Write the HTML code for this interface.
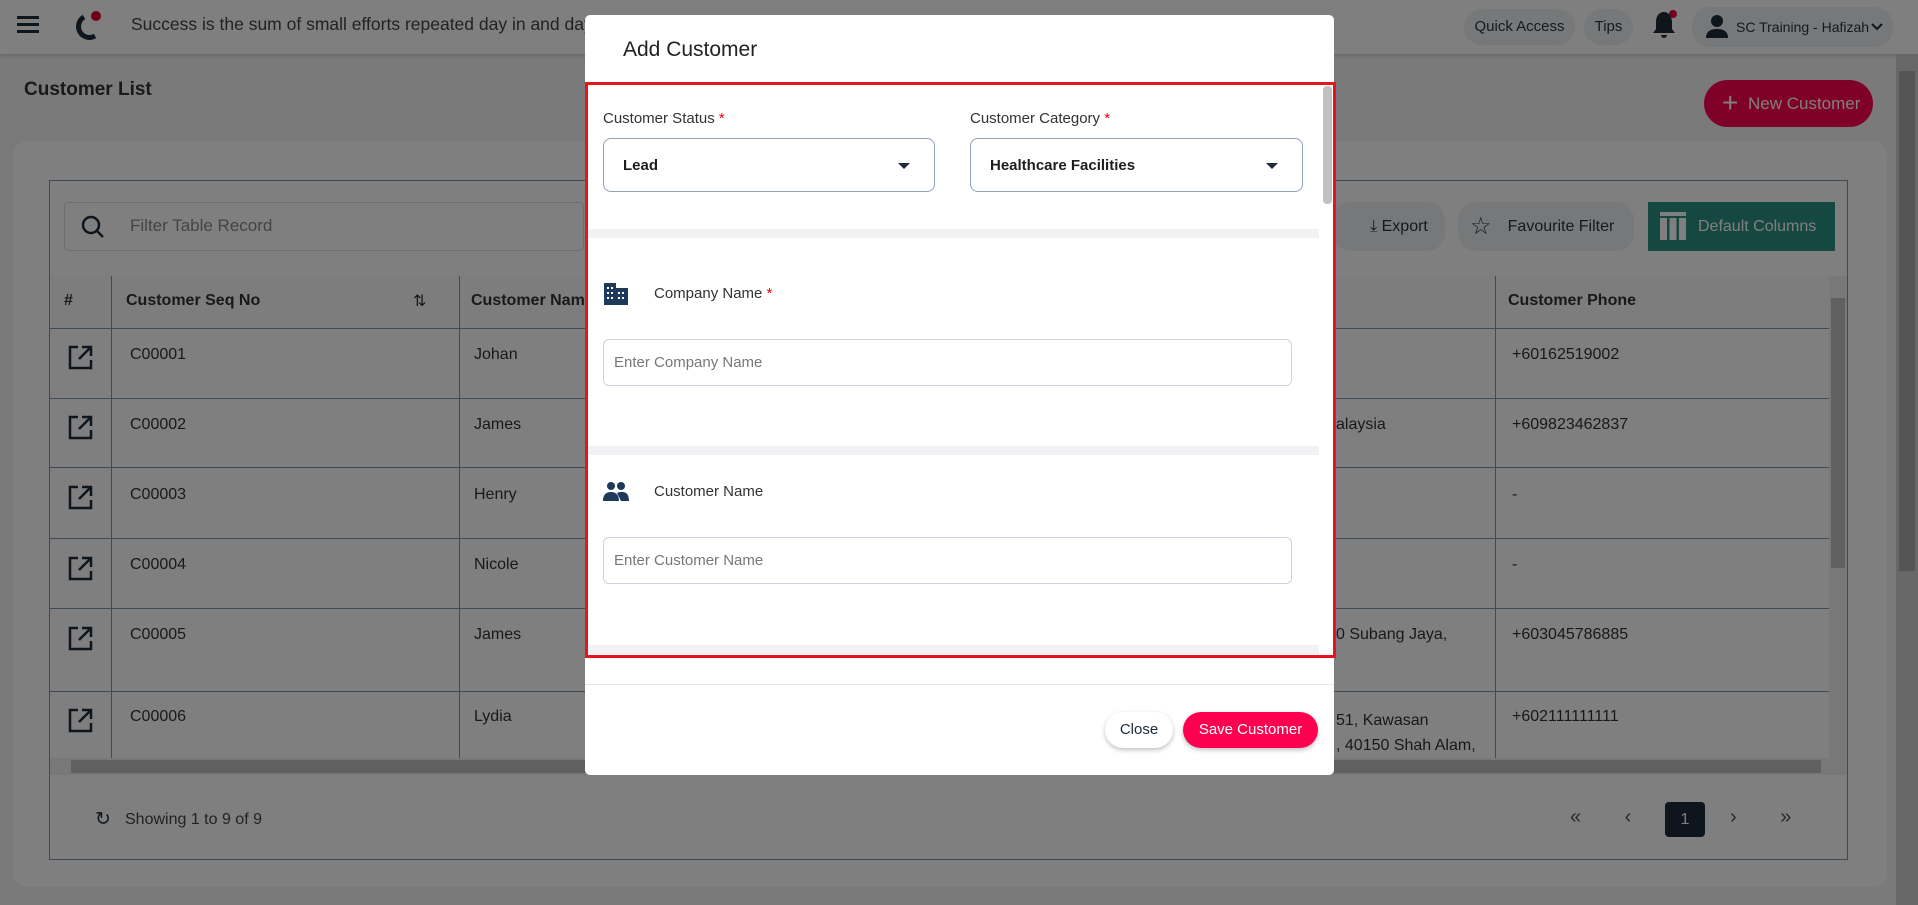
<!DOCTYPE html>
<html><head><meta charset="utf-8"><style>
*{box-sizing:border-box;margin:0;padding:0}
body{width:1918px;height:905px;overflow:hidden;background:#f4f4f4;font-family:"Liberation Sans",sans-serif;position:relative;color:#1e2a3a}
.a{position:absolute;white-space:nowrap}
.top{left:0;top:0;width:1918px;height:54px;background:#fff;box-shadow:0 2px 4px rgba(0,0,0,.15)}
.pill{background:#eef0f3;border-radius:18px;font-size:15px;color:#2a3444;text-align:center}
.card{left:13px;top:141px;width:1874px;height:746px;background:#fff;border-radius:14px}
.tbl{left:49px;top:180px;width:1799px;height:680px;border:1px solid #7d95ad}
.cell{position:absolute;font-size:16px;color:#333;white-space:nowrap}
.vl{position:absolute;width:1px;background:#7d95ad}
.hl{position:absolute;height:1px;background:#7d95ad;left:50px;width:1780px}
.ov{left:0;top:0;width:1918px;height:905px;background:rgba(0,0,0,.5)}
.modal{left:585px;top:15px;width:749px;height:760px;background:#fff;border-radius:5px}
.lbl{font-size:15px;color:#333}
.sel{border:1px solid #8fa3b8;border-radius:8px;height:54px;font-weight:bold;font-size:15px;padding:18px 19px;color:#1e1e1e}
.car{position:absolute;right:24px;top:24px;width:0;height:0;border-left:6px solid transparent;border-right:6px solid transparent;border-top:6px solid #1e2a3a}
.band{background:#f2f2f5;height:9px}
.inp{border:1px solid #ccd3dc;border-radius:6px;height:47px;font-size:15px;color:#777;padding:14px 10px}
</style></head><body>
<div class="a top"></div>
<svg class="a" style="left:17px;top:14px" width="24" height="20"><rect y="2" width="22" height="3" fill="#1e2a3a"/><rect y="9" width="22" height="3" fill="#1e2a3a"/><rect y="16" width="22" height="3" fill="#1e2a3a"/></svg>
<svg class="a" style="left:70px;top:9px" width="34" height="32"><path d="M14 8 A10 10 0 1 0 25 27" fill="none" stroke="#1e2a3a" stroke-width="5"/><circle cx="26" cy="7" r="5" fill="#e00030"/></svg>
<div class="a" style="left:131px;top:14px;font-size:17.5px;color:#444">Success is the sum of small efforts repeated day in and day out.</div>
<div class="a pill" style="left:1464px;top:9px;width:111px;height:36px;line-height:36px">Quick Access</div>
<div class="a pill" style="left:1584px;top:9px;width:49px;height:36px;line-height:36px">Tips</div>
<svg class="a" style="left:1650px;top:8px" width="30" height="32"><path d="M13 4c-5 1-7 5-7 10v7l-3 4h22l-3-4v-7c0-5-3-9-7-10z M11 27a3 3 0 0 0 6 0z" fill="#1e2a3a"/><circle cx="23" cy="6" r="4" fill="#e00040"/></svg>
<div class="a pill" style="left:1692px;top:7px;width:201px;height:40px;line-height:40px;text-align:left;padding-left:44px;font-size:14px">SC Training - Hafizah</div>
<svg class="a" style="left:1871px;top:22px" width="12" height="10"><path d="M1 2l5 5 5-5" fill="none" stroke="#1e2a3a" stroke-width="2"/></svg>
<svg class="a" style="left:1705px;top:13px" width="24" height="26"><circle cx="12" cy="8" r="6" fill="#1e2a3a"/><path d="M1 25c0-7 5-9 11-9s11 2 11 9z" fill="#1e2a3a"/></svg>
<div class="a" style="left:24px;top:79px;font-size:19px;font-weight:bold;color:#333">Customer List</div>
<div class="a" style="left:1704px;top:80px;width:169px;height:47px;border-radius:24px;background:#ff0050;color:#fff;font-size:17px;line-height:47px;padding-left:44px">New Customer</div>
<div class="a" style="left:1722px;top:92px;color:#fff;font-size:28px;line-height:22px">+</div>
<div class="a card"></div>
<div class="a tbl"></div>
<div class="a" style="left:64px;top:202px;width:520px;height:49px;border:1px solid #ddd;border-radius:4px"></div>
<svg class="a" style="left:80px;top:214px" width="26" height="26"><circle cx="11" cy="11" r="8" fill="none" stroke="#1e2a3a" stroke-width="2.5"/><path d="M17 17l6 6" stroke="#1e2a3a" stroke-width="2.5"/></svg>
<div class="a" style="left:130px;top:216px;font-size:17px;color:#888">Filter Table Record</div>
<div class="a pill" style="left:1333px;top:202px;width:112px;height:49px;line-height:49px;font-size:16px;padding-left:20px">⤓ Export</div>
<div class="a pill" style="left:1458px;top:202px;width:176px;height:49px;line-height:49px;font-size:16px;padding-left:30px"><span style="position:absolute;left:12px;font-size:24px">☆</span>Favourite Filter</div>
<div class="a" style="left:1648px;top:202px;width:187px;height:49px;background:#2a9180;color:#fff;font-size:16px;line-height:49px;padding-left:50px">Default Columns</div>
<svg class="a" style="left:1660px;top:212px" width="26" height="28"><rect width="26" height="4" fill="#fff"/><rect y="6" width="7" height="22" fill="#fff"/><rect x="9.5" y="6" width="7" height="22" fill="#fff"/><rect x="19" y="6" width="7" height="22" fill="#fff"/></svg>
<div class="a" style="left:50px;top:276px;width:1779px;height:52px;background:#fafafa"></div>
<div class="cell" style="left:64px;top:292px;font-weight:bold">#</div>
<div class="cell" style="left:126px;top:292px;font-weight:bold">Customer Seq No</div>
<div class="cell" style="left:413px;top:291px">⇅</div>
<div class="cell" style="left:471px;top:292px;font-weight:bold">Customer Nam</div>
<div class="cell" style="left:1508px;top:292px;font-weight:bold">Customer Phone</div>
<div class="vl" style="left:111px;top:276px;height:482px"></div>
<div class="vl" style="left:459px;top:276px;height:482px"></div>
<div class="vl" style="left:1495px;top:276px;height:482px"></div>
<div class="hl" style="top:328px"></div><div class="hl" style="top:398px"></div><div class="hl" style="top:467px"></div><div class="hl" style="top:538px"></div><div class="hl" style="top:608px"></div><div class="hl" style="top:691px"></div>
<div class="cell" style="left:130px;top:346px">C00001</div><div class="cell" style="left:474px;top:346px">Johan</div><div class="cell" style="left:1512px;top:346px">+60162519002</div>
<div class="cell" style="left:130px;top:416px">C00002</div><div class="cell" style="left:474px;top:416px">James</div><div class="cell" style="left:1336px;top:416px">alaysia</div><div class="cell" style="left:1512px;top:416px">+609823462837</div>
<div class="cell" style="left:130px;top:486px">C00003</div><div class="cell" style="left:474px;top:486px">Henry</div><div class="cell" style="left:1512px;top:486px">-</div>
<div class="cell" style="left:130px;top:556px">C00004</div><div class="cell" style="left:474px;top:556px">Nicole</div><div class="cell" style="left:1512px;top:556px">-</div>
<div class="cell" style="left:130px;top:626px">C00005</div><div class="cell" style="left:474px;top:626px">James</div><div class="cell" style="left:1336px;top:626px">0 Subang Jaya,</div><div class="cell" style="left:1512px;top:626px">+603045786885</div>
<div class="cell" style="left:130px;top:708px">C00006</div><div class="cell" style="left:474px;top:708px">Lydia</div><div class="cell" style="left:1336px;top:708px;line-height:25px">51, Kawasan<br>, 40150 Shah Alam,</div><div class="cell" style="left:1512px;top:708px">+602111111111</div>
<svg class="a" style="left:68px;top:345px" width="26" height="400"><g fill="none" stroke="#1e2a3a" stroke-width="2.5"><g id="ic"><path d="M10 2H2v21h21v-8 M14 2h9v9 M23 2L11 14"/></g><use href="#ic" y="70"/><use href="#ic" y="140"/><use href="#ic" y="211"/><use href="#ic" y="281"/><use href="#ic" y="363"/></g></svg>
<div class="a" style="left:1829px;top:276px;width:18px;height:482px;background:#f0f0f0"></div>
<div class="a" style="left:1831px;top:298px;width:14px;height:270px;background:#c1c1c1"></div>
<div class="a" style="left:50px;top:758px;width:1797px;height:17px;background:#f0f0f0"></div>
<div class="a" style="left:71px;top:760px;width:1750px;height:13px;background:#c1c1c1"></div>
<div class="a" style="left:95px;top:808px;font-size:19px">↻</div>
<div class="a" style="left:125px;top:811px;font-size:16px;color:#444">Showing 1 to 9 of 9</div>
<div class="a" style="left:1570px;top:806px;font-size:20px;color:#556;word-spacing:38px">« ‹</div>
<div class="a" style="left:1665px;top:802px;width:40px;height:35px;background:#1e2a3a;border-radius:4px;color:#fff;text-align:center;line-height:35px;font-size:16px">1</div>
<div class="a" style="left:1730px;top:806px;font-size:20px;color:#556;word-spacing:38px">› »</div>
<div class="a" style="left:1896px;top:54px;width:22px;height:851px;background:#d0d0d0"></div>
<div class="a" style="left:1899px;top:71px;width:16px;height:500px;background:#a8a8a8"></div>
<div class="a ov"></div>
<div class="a modal"></div>
<div class="a" style="left:623px;top:38px;font-size:21px;color:#222">Add Customer</div>
<div class="a" style="left:585px;top:82px;width:751px;height:576px;border:3px solid #e8141c"></div>
<div class="a" style="left:1323px;top:86px;width:9px;height:118px;background:#c1c1c1;border-radius:4px"></div>
<div class="a lbl" style="left:603px;top:110px">Customer Status <span style="color:#e00">*</span></div>
<div class="a lbl" style="left:970px;top:110px">Customer Category <span style="color:#e00">*</span></div>
<div class="a sel" style="left:603px;top:138px;width:332px">Lead<i class="car"></i></div>
<div class="a sel" style="left:970px;top:138px;width:333px">Healthcare Facilities<i class="car"></i></div>
<div class="a band" style="left:588px;top:229px;width:731px"></div>
<svg class="a" style="left:604px;top:283px" width="24" height="22"><path d="M0 0h12v5h12v17H0z" fill="#1e3a5a"/><g fill="#fff"><rect x="3" y="4" width="2" height="2"/><rect x="7" y="4" width="2" height="2"/><rect x="3" y="9" width="2" height="2"/><rect x="7" y="9" width="2" height="2"/><rect x="3" y="14" width="2" height="2"/><rect x="7" y="14" width="2" height="2"/><rect x="14" y="9" width="2" height="2"/><rect x="18" y="9" width="2" height="2"/><rect x="14" y="14" width="2" height="2"/><rect x="18" y="14" width="2" height="2"/></g></svg>
<div class="a lbl" style="left:654px;top:285px">Company Name <span style="color:#e00">*</span></div>
<div class="a inp" style="left:603px;top:339px;width:689px">Enter Company Name</div>
<div class="a band" style="left:588px;top:446px;width:731px"></div>
<svg class="a" style="left:603px;top:481px" width="26" height="20"><circle cx="8" cy="5" r="4" fill="#1e3a5a"/><circle cx="18" cy="5" r="4" fill="#1e3a5a"/><path d="M0 20c0-7 4-9 8-9s8 2 8 9z M14 12c2-1 4-1 5-1 4 0 7 2 7 9h-8z" fill="#1e3a5a"/></svg>
<div class="a lbl" style="left:654px;top:483px">Customer Name</div>
<div class="a inp" style="left:603px;top:537px;width:689px">Enter Customer Name</div>
<div class="a band" style="left:588px;top:645px;width:731px"></div>
<div class="a" style="left:585px;top:684px;width:749px;height:1px;background:#e3e7ec"></div>
<div class="a" style="left:1105px;top:712px;width:68px;height:36px;border-radius:18px;background:#fff;box-shadow:0 2px 5px rgba(0,0,0,.25);text-align:center;line-height:36px;font-size:15px;color:#1e2a3a">Close</div>
<div class="a" style="left:1183px;top:712px;width:135px;height:36px;border-radius:18px;background:#ff0050;box-shadow:0 2px 5px rgba(0,0,0,.25);text-align:center;line-height:36px;font-size:15px;color:#fff">Save Customer</div>
</body></html>
